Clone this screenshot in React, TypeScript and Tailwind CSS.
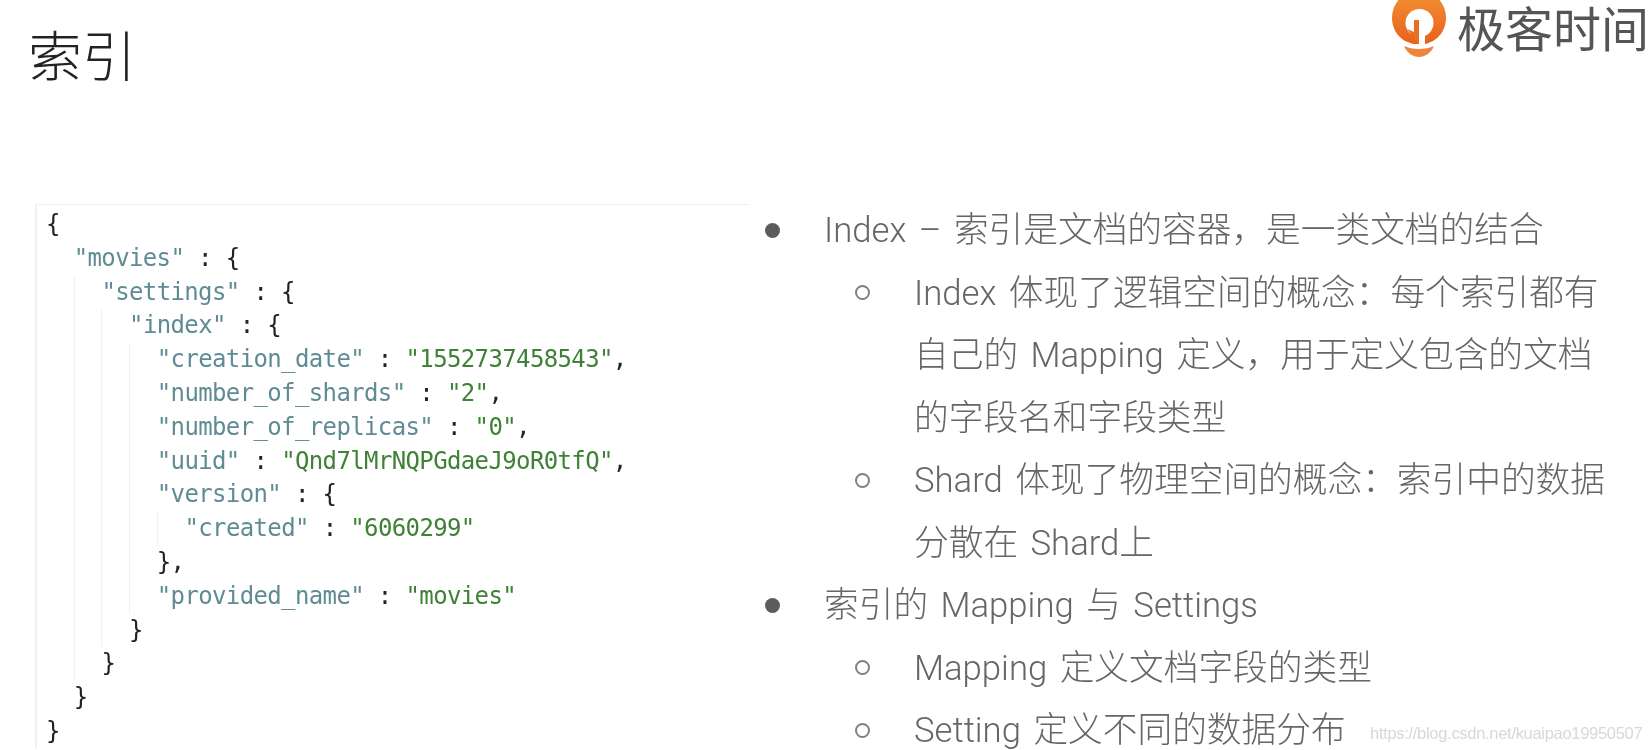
const mono = "font-['DejaVu_Sans_Mono','Liberation_Mono',monospace]";

type Line = { depth: number; k?: string; v?: string; t?: string };

const lines: Line[] = [
  { depth: 0, t: "{" },
  { depth: 1, k: '"movies"', t: " : {" },
  { depth: 2, k: '"settings"', t: " : {" },
  { depth: 3, k: '"index"', t: " : {" },
  { depth: 4, k: '"creation_date"', v: '"1552737458543"', t: "," },
  { depth: 4, k: '"number_of_shards"', v: '"2"', t: "," },
  { depth: 4, k: '"number_of_replicas"', v: '"0"', t: "," },
  { depth: 4, k: '"uuid"', v: '"Qnd7lMrNQPGdaeJ9oR0tfQ"', t: "," },
  { depth: 4, k: '"version"', t: " : {" },
  { depth: 5, k: '"created"', v: '"6060299"' },
  { depth: 4, t: "}," },
  { depth: 4, k: '"provided_name"', v: '"movies"' },
  { depth: 3, t: "}" },
  { depth: 2, t: "}" },
  { depth: 1, t: "}" },
  { depth: 0, t: "}" },
];

function CodeLine({ line }: { line: Line }) {
  return (
    <div className="h-[33.8px] flex whitespace-pre">
      {Array.from({ length: line.depth }).map((_, i) => (
        <span key={i} className={i === 0 ? "w-[27.7px] shrink-0" : "w-[27.7px] shrink-0 border-l border-[#f1f1f1]"} />
      ))}
      <span>
        {line.k && <span className="text-[#5f8c94]">{line.k}</span>}
        {line.v && <span> : </span>}
        {line.v && <span className="text-[#3f8136]">{line.v}</span>}
        {line.t}
      </span>
    </div>
  );
}

function Logo() {
  return (
    <div className="flex items-start h-[58px]">
      <svg width="54" height="58" viewBox="0 0 54 58" className="shrink-0">
        <defs>
          <linearGradient id="pin" x1="0" y1="0" x2="0" y2="1">
            <stop offset="0" stopColor="#f29433" />
            <stop offset="1" stopColor="#e8601c" />
          </linearGradient>
        </defs>
        <path d="M27 -10C12 -10 0 3 0 18c0 10 5 18 13 23l8 3h13l7-3c8-5 13-13 13-23C54 3 42 -10 27 -10Z" fill="url(#pin)" />
        <circle cx="27.500" cy="23" r="14" fill="#ffffff" />
        <path d="M27 26h6v19H27Z" fill="#ffffff" />
        <path d="M22 20h5v24h-1L15 29l7 3Z" fill="#e8701f" />
        <path d="M12 46c8 4 22 4 30 0-3 7-9 11-15 11S15 53 12 46Z" fill="#f0843a" />
      </svg>
      <span className="ml-[11px] text-[48px] leading-[52px] text-[#555555] font-['Noto_Sans_CJK_SC',sans-serif]">
        极客时间
      </span>
    </div>
  );
}

function Bullet({ children, sub }: { children: React.ReactNode; sub?: boolean }) {
  return (
    <li className={sub ? "flex pl-[90px]" : "flex"}>
      <span className="w-[60px] shrink-0 flex items-center h-[62.5px]">
        {sub ? (
          <span className="ml-[1px] w-[15px] h-[15px] rounded-full border-2 border-[#808080]" />
        ) : (
          <span className="ml-[1px] w-[15px] h-[15px] rounded-full bg-[#5c5c5c]" />
        )}
      </span>
      <span>{children}</span>
    </li>
  );
}

export default function App() {
  return (
    <div className="relative w-[1652px] h-[750px] overflow-hidden bg-white blur-[0.5px]">
      <div className="flex justify-between items-start pl-[28px] pr-[3px]">
        <h1 className="mt-[20px] text-[54px] leading-[68px] font-light text-[#222222] font-['Noto_Sans_CJK_SC',sans-serif]">索引</h1>
        <Logo />
      </div>
      <div className="flex mt-[116px]">
        <div className={`ml-[35px] w-[715px] h-[545px] shrink-0 border-l-2 border-t border-[#f1f1f1] pl-[9px] pt-[3px] text-[24px] leading-[33.8px] tracking-[-0.63px] text-[#222222] ${mono}`}>
          {lines.map((line, i) => (
            <CodeLine key={i} line={line} />
          ))}
        </div>
        <ul className="ml-[14px] mt-[-5px] whitespace-nowrap text-[34.700px] leading-[62.5px] font-light text-[#666666] [word-spacing:4px] font-['Roboto','Noto_Sans_CJK_SC',sans-serif]">
          <Bullet>Index – 索引是文档的容器，是一类文档的结合</Bullet>
          <Bullet sub>
            Index 体现了逻辑空间的概念：每个索引都有<br />自己的 Mapping 定义，用于定义包含的文档<br />的字段名和字段类型
          </Bullet>
          <Bullet sub>
            Shard 体现了物理空间的概念：索引中的数据<br />分散在 Shard上
          </Bullet>
          <Bullet>索引的 Mapping 与 Settings</Bullet>
          <Bullet sub>Mapping 定义文档字段的类型</Bullet>
          <Bullet sub>Setting 定义不同的数据分布</Bullet>
        </ul>
      </div>
      <span className="absolute left-[1370px] top-[721px] text-[16.500px] leading-[24px] tracking-[-0.3px] text-[#d8d8d8] font-['Liberation_Sans',sans-serif]">
        https://blog.csdn.net/kuaipao19950507
      </span>
    </div>
  );
}
